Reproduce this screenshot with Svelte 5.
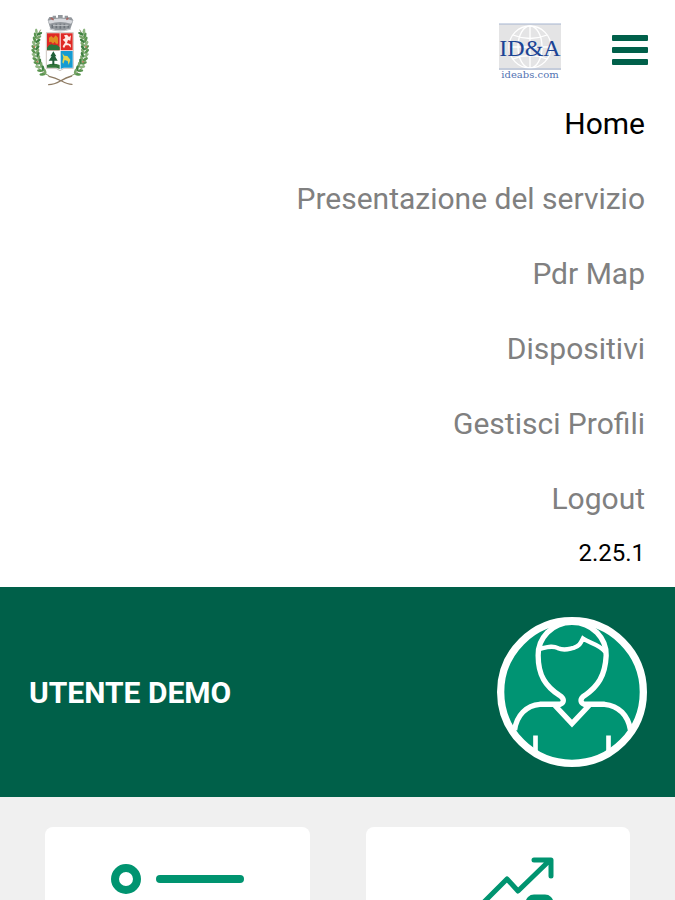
<script>
  const links = ['Home', 'Presentazione del servizio', 'Pdr Map', 'Dispositivi', 'Gestisci Profili', 'Logout'];
  const leaves = Array.from({ length: 12 }, (_, i) => {
    const t = i / 11;
    return { x: 62 - 26 * Math.sin(Math.PI * (0.06 + t * 0.74)) + t * 20, y: 78 + t * 122, a: 30 - t * 85 };
  });
  let open = $state(true);
</script>

<div class="page">
  <header>
    <a class="brand" href="#home" aria-label="Comune">
      <svg class="crest" viewBox="30 27 180 216" aria-hidden="true">
        <g fill="none" stroke="#8d7a62" stroke-width="4" stroke-linecap="round">
          <path d="M87 214Q104 218 125 228Q143 238 156 238M155 213Q139 217 121 228Q102 239 86 239" />
        </g>
        {#each [false, true] as mirrored}
          <g transform={mirrored ? 'translate(241 0) scale(-1 1)' : undefined}>
            <path d="M62 74Q24 130 51 182Q62 202 87 212" fill="none" stroke="#8a9a70" stroke-width="3" />
            {#each leaves as leaf, i}
              <g transform="translate({leaf.x} {leaf.y}) rotate({leaf.a})">
                <ellipse cx="-8" cy="0" rx="4" ry="9" transform="rotate(-38)" fill={i % 3 ? '#5a9550' : '#8db680'} />
                <ellipse cx="8" cy="2" rx="4" ry="9" transform="rotate(38)" fill={i % 2 ? '#78a568' : '#3f8040'} />
              </g>
            {/each}
            <circle cx="43" cy="125" r="3" fill="#b77d58" />
            <circle cx="52" cy="170" r="3" fill="#b77d58" />
          </g>
        {/each}
        <path d="M79 83V190H108L120 197L132 190H160V83Z" fill="#fff" stroke="#b3a79e" stroke-width="2" />
        <path d="M81 85H119V136H81ZM122 85H158V136H122Z" fill="#df2925" />
        <path d="M81 128Q91 113 101 120Q112 117 119 127V136H81Z" fill="#2c763c" />
        <path d="M87 112V98L94 93L100 99L107 91L114 98V116H108L104 110L99 116L93 110Z" fill="#df8e23" />
        <path d="M128 124L136 112L128 104L136 99L132 91L141 89L147 96L153 91L151 107L144 105L141 114L152 118L153 128L146 121L137 121L132 130Z" fill="#ffe9e4" />
        <path d="M122 138H158V188H131L122 192Z" fill="#159bd2" />
        <path d="M127 145L133 152L142 153L151 164L146 180L143 168L134 165L130 176L127 172L130 158Z" fill="#e3d44d" />
        <path d="M81 180Q100 172 119 180V192L109 188H81Z" fill="#34773b" />
        <path d="M100 139L109 154H105L113 167H103V180H97V167H86L95 154H91Z" fill="#215f38" />
        <path d="M83 45L88 36H98V32H108V38H114V30H128V38H134V32H144V37H154L160 46L151 72Q120 81 91 71Z" fill="#93989d" />
        <path d="M84 47Q120 34 159 47L153 56Q121 46 89 56Z" fill="#d6d8dc" />
        <path d="M97 59V69M109 56V70M121 56V71M133 56V70M145 59V68" stroke="#6c7279" stroke-width="5" />
        <path d="M89 72Q120 84 153 72M99 61H146" fill="none" stroke="#c1c4c8" stroke-width="3" />
        <path d="M92 39L101 44M145 39L139 44" stroke="#a96764" stroke-width="5" />
      </svg>
    </a>
    <div class="tools">
      <a class="partner" href="#ideabs" aria-label="ID&A ideabs.com">
        <svg viewBox="0 0 66 60" aria-hidden="true">
          <rect x="1" y="2" width="62" height="46" fill="#e4e4e5" />
          <g fill="none" stroke="#fff" stroke-width="1.3">
            <circle cx="32" cy="25" r="21" />
            <ellipse cx="32" cy="25" rx="12" ry="21" />
            <path d="M32 4V46M11 25H53M15 13Q32 20 49 13M15 37Q32 30 49 37" />
          </g>
          <path d="M1 2H63M1 47H63" stroke="#a5b4d0" />
          <text x="32" y="34" text-anchor="middle" class="mark">ID&amp;A</text>
          <text x="32" y="56" text-anchor="middle" class="domain">ideabs.com</text>
        </svg>
      </a>
      <button class="burger" aria-label="Menu" aria-expanded={open} onclick={() => (open = !open)}>
        <span></span><span></span><span></span>
      </button>
    </div>
  </header>

  {#if open}
    <nav aria-label="Menu principale">
      {#each links as label, i}
        <a href="#{label.toLowerCase().replaceAll(' ', '-')}" class:active={i === 0}>{label}</a>
      {/each}
      <small>2.25.1</small>
    </nav>
  {/if}

  <section class="user">
    <h1>UTENTE DEMO</h1>
    <svg class="avatar" viewBox="36 34 452 452" aria-hidden="true">
      <circle cx="262" cy="260" r="214" fill="#009473" />
      <g fill="none" stroke="#fff" stroke-width="16">
        <path d="M262 50C200 50 159 100 160 150C160 211 183 243 224 270C239 279 240 291 226 297H165C125 300 95 330 89 375" />
        <path d="M262 50C325 50 366 100 365 150C362 211 340 243 301 270C286 279 285 291 299 297H360C403 301 431 331 438 374" />
        <path d="M210 300L262 355L314 300" />
        <path d="M165 130C187 125 203 119 220 128C240 137 252 130 267 127C284 122 288 113 295 99C315 113 343 115 362 139" stroke-width="13" />
        <path d="M152 391V443M372 391V443" stroke-width="14" />
      </g>
      <circle cx="262" cy="260" r="215" fill="none" stroke="#fff" stroke-width="22" />
    </svg>
  </section>

  <main>
    <a class="card" href="#elenco" aria-label="Elenco">
      <svg viewBox="0 0 134 120" aria-hidden="true" fill="none" stroke="#009470">
        {#each [22, 64, 106] as y}
          <circle cx="16" cy={y} r="11" stroke-width="8" />
          <path d="M50 {y}H130" stroke-width="8" stroke-linecap="round" />
        {/each}
      </svg>
    </a>
    <a class="card" href="#statistiche" aria-label="Statistiche">
      <svg viewBox="0 0 134 120" aria-hidden="true" fill="none" stroke="#009470" stroke-width="5" stroke-linecap="round" stroke-linejoin="round">
        <path d="M23 75L76 22L87 34L118 4M103 3H120V19" />
        <rect x="97" y="40" width="23" height="76" rx="6" fill="#009470" />
        <rect x="60" y="62" width="23" height="54" rx="6" fill="#009470" />
        <rect x="23" y="84" width="23" height="32" rx="6" fill="#009470" />
      </svg>
    </a>
  </main>
</div>

<style>
  :global(body) { margin: 0; background: #f0f0f0; }
  .page {
    display: flex;
    flex-direction: column;
    height: 100vh;
    overflow: hidden;
    font-family: Roboto, "Liberation Sans", sans-serif;
    color: #000;
  }
  header, nav, .user { flex: none; }
  header {
    display: flex;
    justify-content: space-between;
    align-items: flex-start;
    padding: 14px 27px 0 30px;
    background: #fff;
  }
  .brand, .partner { display: block; }
  .crest { display: block; width: 60px; height: 72px; }
  .tools { display: flex; align-items: flex-start; gap: 48px; padding-top: 8px; }
  .partner svg { display: block; width: 66px; height: 60px; }
  .mark { font: 24px "Liberation Serif", serif; fill: #1c4495; }
  .domain { font: 10px "DejaVu Serif", serif; fill: #5272b2; }
  .burger {
    display: flex;
    flex-direction: column;
    gap: 6px;
    width: 36px;
    padding: 13px 0;
    border: 0;
    background: none;
    cursor: pointer;
  }
  .burger span { height: 6px; border-radius: 1px; background: #00604a; }
  nav {
    display: flex;
    flex-direction: column;
    align-items: flex-end;
    padding: 0 30px 16px;
    background: #fff;
  }
  nav a { font-size: 30px; line-height: 75px; color: #808080; text-decoration: none; }
  nav a.active { color: #000; }
  nav small { font-size: 24px; line-height: 35px; }
  .user {
    display: flex;
    justify-content: space-between;
    align-items: center;
    padding: 30px 28px 30px 29px;
    background: #006049;
    color: #fff;
  }
  h1 { margin: 0; font-size: 30px; font-weight: 700; }
  .avatar { display: block; width: 150px; height: 150px; }
  main {
    flex: 1;
    display: grid;
    grid-template-columns: 1fr 1fr;
    gap: 56px;
    padding: 30px 45px;
    background: #f0f0f0;
  }
  .card { display: flex; justify-content: center; align-items: flex-start; height: 265px; padding-top: 30px; box-sizing: border-box; border-radius: 8px; background: #fff; }
  .card svg { width: 134px; height: 120px; }
</style>
